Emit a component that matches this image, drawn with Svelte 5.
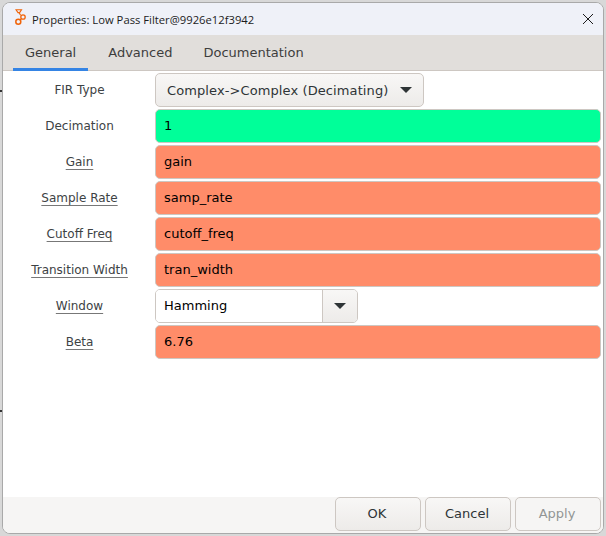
<script lang="ts">
  type Row = {
    label: string;
    kind: 'menu' | 'entry' | 'combo';
    value: string;
    tone?: string;
    underline?: boolean;
  };

  const tabs = ['General', 'Advanced', 'Documentation'];

  const rows: Row[] = [
    { label: 'FIR Type', kind: 'menu', value: 'Complex->Complex (Decimating)' },
    { label: 'Decimation', kind: 'entry', value: '1', tone: 'green' },
    { label: 'Gain', kind: 'entry', value: 'gain', tone: 'orange', underline: true },
    { label: 'Sample Rate', kind: 'entry', value: 'samp_rate', tone: 'orange', underline: true },
    { label: 'Cutoff Freq', kind: 'entry', value: 'cutoff_freq', tone: 'orange', underline: true },
    { label: 'Transition Width', kind: 'entry', value: 'tran_width', tone: 'orange', underline: true },
    { label: 'Window', kind: 'combo', value: 'Hamming', underline: true },
    { label: 'Beta', kind: 'entry', value: '6.76', tone: 'orange', underline: true },
  ];
</script>

<div class="desktop">
  <span class="tick first"></span>
  <span class="tick second"></span>
  <div class="window">
    <header class="titlebar">
      <svg class="logo" width="12" height="17" viewBox="0 0 12 17" fill="none" stroke="#f0640a">
        <path d="M1 .8h5.5L4.6 3.6H3z" stroke-width="1.1" />
        <path d="M4 3.6l1.6 2.6" stroke-width="1.1" />
        <circle cx="8" cy="8" r="2.2" stroke-width="1.3" />
        <circle cx="3.3" cy="12.8" r="2.5" stroke-width="1.5" />
        <path d="M5 11l1.4-1.4" stroke-width="1.1" />
      </svg>
      <span class="title">Properties: Low Pass Filter@9926e12f3942</span>
      <svg class="close" width="12" height="12" viewBox="0 0 12 12" stroke="#1c1c1c" stroke-width="1">
        <path d="M1 1l10 10M11 1L1 11" />
      </svg>
    </header>

    <nav class="tabs">
      {#each tabs as tab, i}
        <div class="tab" class:active={i === 0}>{tab}</div>
      {/each}
    </nav>

    <main class="form">
      {#each rows as row}
        <div class="row">
          <div class="label" class:underline={row.underline}>{row.label}</div>
          {#if row.kind === 'menu'}
            <div class="menu">
              <span class="menu-text">{row.value}</span>
              <svg width="12" height="6" viewBox="0 0 12 6"><path d="M0 0h12L6 6z" fill="#2e3436" /></svg>
            </div>
          {:else if row.kind === 'combo'}
            <div class="combo">
              <span class="combo-text">{row.value}</span>
              <span class="combo-arrow">
                <svg width="12" height="6" viewBox="0 0 12 6"><path d="M0 0h12L6 6z" fill="#2e3436" /></svg>
              </span>
            </div>
          {:else}
            <div class="entry {row.tone}">{row.value}</div>
          {/if}
        </div>
      {/each}
    </main>

    <footer class="actions">
      <button>OK</button>
      <button>Cancel</button>
      <button class="disabled">Apply</button>
    </footer>
  </div>
</div>

<style>
  :global(body) {
    margin: 0;
    background: #d9d9d9;
  }

  .desktop {
    position: relative;
    width: 606px;
    height: 536px;
    box-sizing: border-box;
    padding: 2px;
    background: #d8d8d8;
    font-family: 'DejaVu Sans', sans-serif;
    font-size: 13px;
    color: #2e3436;
  }

  .tick {
    position: absolute;
    left: 0;
    width: 2px;
    height: 2px;
    background: #333;
  }

  .first {
    top: 90px;
  }

  .second {
    top: 410px;
  }

  .window {
    height: 100%;
    box-sizing: border-box;
    display: flex;
    flex-direction: column;
    border: 1px solid #a9a9a9;
    border-radius: 8px;
    background: #fff;
    overflow: hidden;
  }

  .titlebar {
    height: 32px;
    flex: none;
    display: flex;
    align-items: center;
    padding: 0 9px 0 12px;
    background: #eff1f8;
  }

  .logo {
    margin-right: 5px;
    margin-top: -3px;
  }

  .title {
    flex: 1;
    font-family: 'Open Sans', sans-serif;
    font-size: 11.25px;
    color: #1c1c1c;
  }

  .tabs {
    height: 36px;
    flex: none;
    box-sizing: border-box;
    display: flex;
    padding-left: 10px;
    background: #e1dedb;
    border-bottom: 1px solid #cdc7c2;
  }

  .tab {
    padding: 10px 12px 0;
    margin-right: 8px;
    color: #3d3d3d;
  }

  .tab:nth-child(2) {
    margin-right: 7px;
  }

  .tab.active {
    border-bottom: 3px solid #3584e4;
    margin-bottom: -1px;
  }

  .form {
    flex: 1;
    display: flex;
    flex-direction: column;
    gap: 2px;
    padding: 2px 2px 0 0;
  }

  .row {
    display: flex;
    height: 34px;
    align-items: stretch;
  }

  .label {
    width: 153px;
    flex: none;
    margin-right: -1px;
    text-align: center;
    line-height: 35px;
    font-size: 12px;
    color: #3d4244;
  }

  .underline {
    text-decoration: underline;
    text-decoration-color: #777;
    text-underline-offset: 3px;
  }

  .entry {
    flex: 1;
    box-sizing: border-box;
    padding-left: 8px;
    line-height: 31px;
    border: 1px solid #cdc7c2;
    border-radius: 5px;
    color: #000;
  }

  .green {
    background: #00ff99;
  }

  .orange {
    background: #ff8c69;
  }

  .menu {
    width: 269px;
    box-sizing: border-box;
    display: flex;
    align-items: center;
    justify-content: space-between;
    padding: 0 11px;
    border: 1px solid #cdc7c2;
    border-radius: 5px;
    background: linear-gradient(#f8f7f6, #edebe9);
  }

  .menu-text {
    letter-spacing: 0.1px;
  }

  .combo {
    width: 203px;
    box-sizing: border-box;
    display: flex;
    border: 1px solid #cdc7c2;
    border-radius: 5px;
    overflow: hidden;
  }

  .combo-text {
    flex: 1;
    padding-left: 8px;
    line-height: 32px;
    color: #000;
    background: #fff;
  }

  .combo-arrow {
    width: 34px;
    display: flex;
    align-items: center;
    justify-content: center;
    border-left: 1px solid #cdc7c2;
    background: linear-gradient(#f8f7f6, #edebe9);
  }

  .actions {
    height: 36px;
    flex: none;
    display: flex;
    justify-content: flex-end;
    gap: 4px;
    padding-right: 2px;
    background: #f6f5f4;
  }

  button {
    width: 86px;
    height: 34px;
    padding: 0 2px 2px 0;
    font: inherit;
    color: #2e3436;
    border: 1px solid #cdc7c2;
    border-radius: 5px;
    background: linear-gradient(#f8f7f6, #edebe9);
  }

  button.disabled {
    color: #929595;
    background: #f6f5f4;
  }
</style>
